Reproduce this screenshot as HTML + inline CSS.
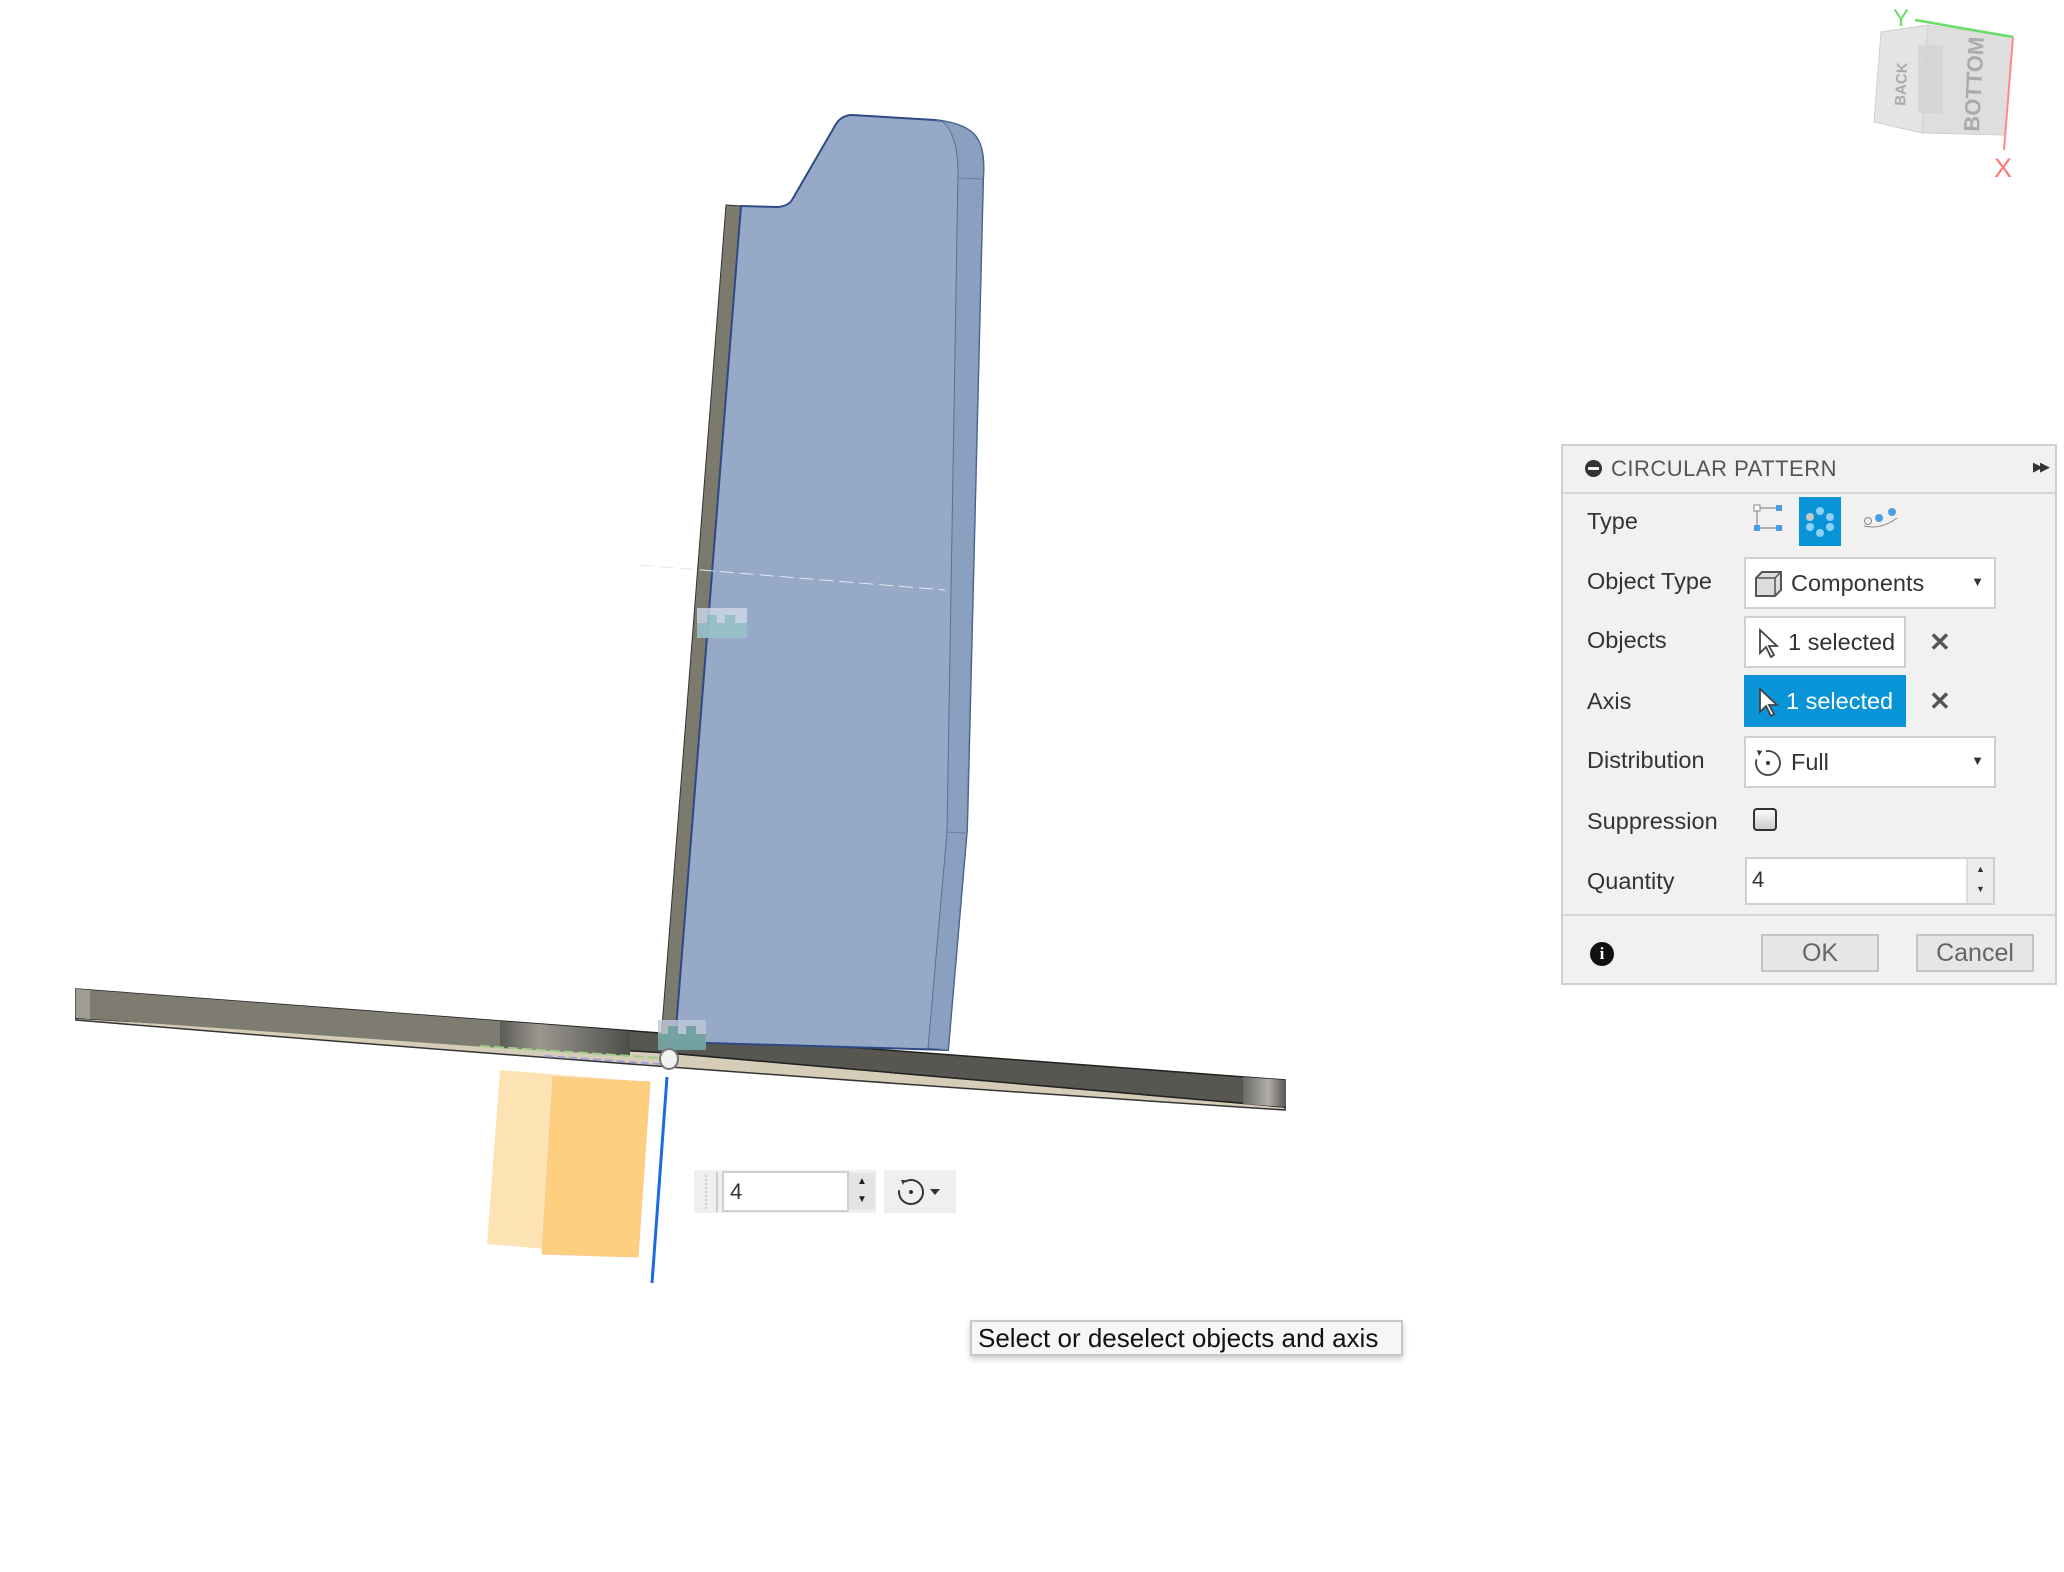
<!DOCTYPE html>
<html><head><meta charset="utf-8"><style>
body{margin:0;width:2064px;height:1572px;background:#fff;position:relative;overflow:hidden;font-family:"Liberation Sans",sans-serif}
.p{position:absolute;left:1561px;top:444px;width:496px;height:541px;background:#f1f1f1;border:2px solid #d0d0d0;box-sizing:border-box;color:#333;font-size:23.5px}
.hd{position:absolute;left:0;top:0;right:0;height:46px;border-bottom:2px solid #d4d4d4}
.lb{position:absolute;left:24px}
.box{position:absolute;background:#fff;border:2px solid #cfcfcf;box-sizing:border-box}
.btn{position:absolute;top:488px;height:38px;background:#e6e6e6;border:2px solid #c4c4c4;box-sizing:border-box;text-align:center;line-height:34px;color:#666;font-size:25px}
.x{position:absolute;left:366px;font-size:26px;color:#555;font-weight:bold}
</style></head><body>
<svg width="2064" height="1572" style="position:absolute;left:0;top:0">
<defs>
<linearGradient id="cyl" x1="0" x2="1"><stop offset="0" stop-color="#5c5a55"/><stop offset=".3" stop-color="#9a9890"/><stop offset="1" stop-color="#4e4d49"/></linearGradient>
<linearGradient id="cap" x1="0" x2="1"><stop offset="0" stop-color="#6a6964"/><stop offset=".6" stop-color="#b0aea6"/><stop offset="1" stop-color="#5c5b56"/></linearGradient>
</defs>
<path d="M76 1018 L668 1053 L1285 1107 L1285 1110 Q700 1072 76 1020Z" fill="#d6cdb9" stroke="#333" stroke-width="1.5"/>
<path d="M76 989 L1285 1080 L1285 1107 L668 1053 L76 1018Z" fill="#575650" stroke="#222" stroke-width="1.5"/>
<path d="M76 989 L500 1021 L500 1048 L76 1018Z" fill="#7e7b70"/>
<path d="M500 1021 L630 1031 L630 1056 L500 1048Z" fill="url(#cyl)"/>
<path d="M1243 1077 L1285 1080 L1285 1107 L1243 1104Z" fill="url(#cap)"/>
<path d="M76 989 L90 990 L90 1019 L76 1018Z" fill="#a09d92"/>
<line x1="480" y1="1046" x2="660" y2="1058" stroke="#9fd08a" stroke-width="2" stroke-dasharray="10 4"/>
<line x1="545" y1="1056" x2="660" y2="1064" stroke="#a0a0d8" stroke-width="2" stroke-dasharray="8 4"/>
<path d="M726 205 L741 206 L675 1042 L661 1040Z" fill="#7c796d" stroke="#333" stroke-width="1"/>
<path d="M741 206 L778 207 Q788 206 792 200 L836 124 Q842 115 852 115 L935 120 Q970 124 978 140 Q985 152 983 180 L967 829 L948 1050 L675 1042Z" fill="#96aac8" stroke="#2d4a86" stroke-width="2"/>
<path d="M940 120 Q957 130 958 170 L947 832 L928 1048 L948 1050 L967 829 L983 180 Q985 152 978 140 Q970 124 935 120Z" fill="#8aa0c0" stroke="#5a6e98" stroke-width="1"/>
<line x1="958" y1="178" x2="983" y2="179" stroke="#6a7ea6"/>
<line x1="947" y1="832" x2="966" y2="833" stroke="#6a7ea6"/>
<line x1="640" y1="565" x2="945" y2="590" stroke="#dde9f2" stroke-width="1" stroke-dasharray="14 6"/>
<rect x="697" y="608" width="50" height="30" fill="#cfdae8" opacity=".8"/>
<path d="M697 623 h10 v-8 h10 v8 h8 v-8 h10 v8 h12 v15 h-50Z" fill="#79b4b8" opacity=".6"/>
<rect x="658" y="1020" width="48" height="30" fill="#bcc8d8" opacity=".8"/>
<path d="M658 1034 h10 v-8 h10 v8 h8 v-8 h10 v8 h10 v16 h-48Z" fill="#6a9e9a" opacity=".85"/>
<ellipse cx="669" cy="1059" rx="9" ry="10" fill="#f2f2f2" stroke="#777" stroke-width="2"/>
<path d="M500 1070 L650 1082 L638 1257 L487 1244Z" fill="#fde0ac" opacity=".9"/>
<path d="M553 1077 L650 1082 L638 1257 L542 1254Z" fill="#fdcf7f" stroke="#f8c98a" stroke-width="1"/>
<line x1="667" y1="1077" x2="652" y2="1283" stroke="#1c6be0" stroke-width="3"/>
<path d="M1881 32 L1928 25 L1922 133 L1874 122Z" fill="#e4e4e4" stroke="#d0d0d0"/>
<path d="M1928 25 L2013 37 L2005 135 L1922 133Z" fill="#dedede" stroke="#d0d0d0"/>
<rect x="1918" y="45" width="25" height="68" fill="#d2d3d6" opacity=".8"/>
<line x1="1915" y1="20" x2="2013" y2="37" stroke="#66dd66" stroke-width="2.5"/>
<line x1="2013" y1="37" x2="2004" y2="150" stroke="#ff8888" stroke-width="2"/>
<text x="1893" y="26" font-size="24" fill="#66dd66" font-family="Liberation Sans">Y</text>
<text x="1994" y="177" font-size="27" fill="#ff7777" font-family="Liberation Sans">X</text>
<text transform="translate(1905,106) rotate(-87)" font-size="15" font-weight="bold" fill="#aaa" font-family="Liberation Sans">BACK</text>
<text transform="translate(1979,132) rotate(-87)" font-size="22" font-weight="bold" fill="#aaa" font-family="Liberation Sans">BOTTOM</text>
</svg>

<div style="position:absolute;left:694px;top:1170px;width:182px;height:43px;background:#efefef"></div>
<div style="position:absolute;left:705px;top:1175px;width:8px;height:34px;border-left:2px dotted #ccc"></div>
<div style="position:absolute;left:716px;top:1172px;width:2px;height:40px;background:#ccc"></div>
<div style="position:absolute;left:722px;top:1171px;width:127px;height:41px;background:#fff;border:2px solid #cfcfcf;box-sizing:border-box;font-size:22px;line-height:38px;padding-left:6px;color:#333">4</div>
<div style="position:absolute;left:849px;top:1173px;width:26px;height:37px;background:#e4e4e4;font-size:10px;text-align:center;line-height:18px;color:#222">▲<br>▼</div>
<div style="position:absolute;left:884px;top:1170px;width:72px;height:43px;background:#efefef"></div>
<svg style="position:absolute;left:896px;top:1176px" width="54" height="32"><circle cx="15" cy="16" r="12" fill="none" stroke="#333" stroke-width="2" stroke-dasharray="60 10" transform="rotate(-100 15 16)"/><circle cx="15" cy="16" r="2" fill="#333"/><path d="M5 4 l4 0 l-2 5z" fill="#333"/><path d="M34 13 h10 l-5 6z" fill="#333"/></svg>

<div style="position:absolute;left:970px;top:1320px;width:433px;height:36px;background:#f6f6f6;border:2px solid #c8c8c8;box-sizing:border-box;box-shadow:0 3px 6px rgba(0,0,0,.2);font-size:26px;line-height:32px;padding-left:6px;color:#111;white-space:nowrap">Select or deselect objects and axis</div>

<div class="p">
 <div class="hd">
  <div style="position:absolute;left:22px;top:14px;width:17px;height:17px;border-radius:50%;background:#333"><div style="position:absolute;left:3px;top:7px;width:11px;height:3px;background:#f1f1f1"></div></div>
  <div style="position:absolute;left:48px;top:10px;font-size:22px;color:#555;letter-spacing:.5px">CIRCULAR PATTERN</div>
  <div style="position:absolute;right:8px;top:13px;font-size:13px;color:#333;letter-spacing:-3px">▶▶</div>
 </div>
 <div class="lb" style="top:62px">Type</div>
 <svg style="position:absolute;left:190px;top:58px" width="30" height="28"><rect x="1" y="1" width="6" height="6" fill="#fff" stroke="#888"/><rect x="23" y="1" width="6" height="6" fill="#4c9ee0"/><rect x="1" y="21" width="6" height="6" fill="#4c9ee0"/><rect x="23" y="21" width="6" height="6" fill="#4c9ee0"/><path d="M7 4h16M4 7v14M7 24h16" stroke="#777"/></svg>
 <div style="position:absolute;left:236px;top:51px;width:42px;height:49px;background:#0a94d8"></div>
 <svg style="position:absolute;left:236px;top:51px" width="42" height="49"><g fill="#8fd0f8"><circle cx="21" cy="14" r="4"/><circle cx="11" cy="20" r="4" fill="#c8c8c8"/><circle cx="31" cy="20" r="4"/><circle cx="11" cy="30" r="4"/><circle cx="31" cy="30" r="4"/><circle cx="21" cy="36" r="4"/></g></svg>
 <svg style="position:absolute;left:300px;top:60px" width="36" height="26"><circle cx="5" cy="15" r="3.5" fill="none" stroke="#888"/><circle cx="16" cy="12" r="4" fill="#4c9ee0"/><circle cx="29" cy="6" r="4" fill="#4c9ee0"/><path d="M1 20 Q18 24 34 12" fill="none" stroke="#888"/></svg>

 <div class="lb" style="top:122px">Object Type</div>
 <div class="box" style="left:181px;top:111px;width:252px;height:52px"><svg style="position:absolute;left:8px;top:11px" width="30" height="28"><path d="M2 8 L8 2 H27 V20 L21 26 H2Z" fill="#ddd" stroke="#555" stroke-width="2"/><path d="M2 8 H21 V26 M21 8 L27 2" fill="none" stroke="#555" stroke-width="1.5"/></svg><span style="position:absolute;left:45px;top:11px">Components</span><span style="position:absolute;right:10px;top:15px;font-size:13px">▼</span></div>

 <div class="lb" style="top:181px">Objects</div>
 <div class="box" style="left:181px;top:170px;width:162px;height:52px"><svg style="position:absolute;left:12px;top:10px" width="22" height="32"><path d="M2 2 V25 L8 19 L13 29 L16 27 L11 18 H19Z" fill="#fff" stroke="#444" stroke-width="1.8"/></svg><span style="position:absolute;left:42px;top:11px">1 selected</span></div>
 <div class="x" style="top:181px">✕</div>

 <div class="lb" style="top:242px">Axis</div>
 <div style="position:absolute;left:181px;top:229px;width:162px;height:52px;background:#0a94d8;color:#fff"><svg style="position:absolute;left:14px;top:12px" width="22" height="32"><path d="M2 2 V25 L8 19 L13 29 L16 27 L11 18 H19Z" fill="#fff" stroke="#444" stroke-width="1.8"/></svg><span style="position:absolute;left:42px;top:13px">1 selected</span></div>
 <div class="x" style="top:240px">✕</div>

 <div class="lb" style="top:301px">Distribution</div>
 <div class="box" style="left:181px;top:290px;width:252px;height:52px"><svg style="position:absolute;left:6px;top:9px" width="32" height="32"><circle cx="16" cy="16" r="12" fill="none" stroke="#444" stroke-width="1.8" stroke-dasharray="62 14" transform="rotate(-100 16 16)"/><circle cx="16" cy="16" r="2" fill="#333"/><path d="M5 3 l5 1 l-3 5z" fill="#333"/></svg><span style="position:absolute;left:45px;top:11px">Full</span><span style="position:absolute;right:10px;top:15px;font-size:13px">▼</span></div>

 <div class="lb" style="top:362px">Suppression</div>
 <div style="position:absolute;left:190px;top:362px;width:24px;height:23px;border:2px solid #333;border-radius:4px;background:linear-gradient(#fafafa,#ccc);box-sizing:border-box"></div>

 <div class="lb" style="top:422px">Quantity</div>
 <div class="box" style="left:182px;top:411px;width:250px;height:48px;font-size:22px;line-height:42px;padding-left:5px">4<div style="position:absolute;right:0;top:0;width:25px;height:44px;background:#ececec;border-left:2px solid #ddd;font-size:9px;line-height:20px;text-align:center">▲<br>▼</div></div>

 <div style="position:absolute;left:0;right:0;top:468px;border-top:2px solid #d4d4d4"></div>
 <div style="position:absolute;left:27px;top:496px;width:24px;height:24px;border-radius:50%;background:#111;color:#fff;font-weight:bold;font-size:17px;text-align:center;line-height:24px;font-family:'Liberation Serif',serif">i</div>
 <div class="btn" style="left:198px;width:118px">OK</div>
 <div class="btn" style="left:353px;width:118px">Cancel</div>
</div>
</body></html>
